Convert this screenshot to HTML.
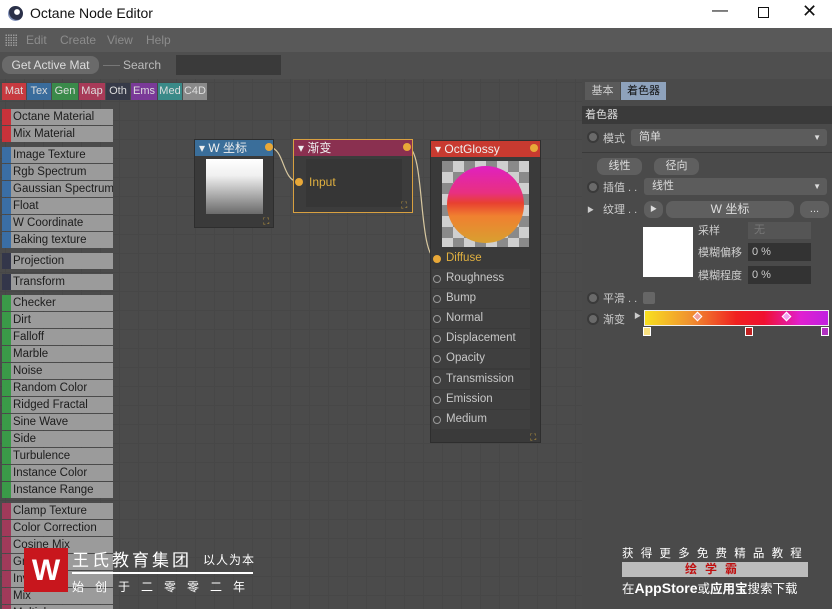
<!DOCTYPE html>
<html><head><meta charset="utf-8"><style>
*{margin:0;padding:0;box-sizing:border-box}
html,body{width:832px;height:609px;overflow:hidden}
body{background:#4a4a4a;font-family:"Liberation Sans","Noto Sans CJK SC",sans-serif;position:relative;font-size:12px}
.a{position:absolute}
#title{left:0;top:0;width:832px;height:28px;background:#fff;color:#111;font-size:14px}
#menu{left:0;top:28px;width:832px;height:24px;background:#595959;color:#8c8c8c}
#tool{left:0;top:52px;width:832px;height:27px;background:#4f4f4f}
#canvas{left:0;top:79px;width:582px;height:530px;background-color:#4b4b4b;background-image:linear-gradient(#474747 1px,transparent 1px),linear-gradient(90deg,#474747 1px,transparent 1px);background-size:19px 19px;background-position:5px 3px}
.tab{top:83px;height:17px;color:#ddd;font-size:11px;line-height:17px;text-align:center}
.it{left:2px;width:111px;height:16px;background:#9b9b9b;color:#1c1c1c;font-size:11.5px;line-height:16px;padding-left:11px;white-space:nowrap;overflow:hidden}
.it i{position:absolute;left:0;top:0;width:9px;height:16px}
.node{background:#3a3a3a;border:1px solid #2e2e2e}
.hd{height:16px;color:#eee;font-size:12px;line-height:16px;padding-left:4px}
.dot{width:8px;height:8px;border-radius:50%;background:#e8a838}
.port{left:432px;width:98px;height:19px;color:#c8c8c8;font-size:11.5px;line-height:19px;padding-left:14px;background:#3f3f3f}
.port b{position:absolute;left:1px;top:6px;width:8px;height:8px;border-radius:50%;border:1.5px solid #999}
#rp{left:582px;top:79px;width:250px;height:530px;background:#4a4a4a;color:#ccc;font-size:11px}
.rb{border-radius:50%;width:12px;height:12px;background:#6a6a6a;border:2px solid #3a3a3a}
.dd{background:#5c5c5c;border-radius:3px;height:17px;line-height:17px;padding-left:8px;color:#ddd}
.btn{background:#5f5f5f;border-radius:7px;height:17px;line-height:17px;text-align:center;color:#ddd}
</style></head><body>
<div id="title" class="a">
<div class="a" style="left:8px;top:6px;width:15px;height:15px;border-radius:50%;background:radial-gradient(circle at 60% 40%,#fff 0 20%,#2a3048 25% 60%,#8090b8 65%)"></div>
<div class="a" style="left:30px;top:5px">Octane Node Editor</div>
<div class="a" style="left:712px;top:2px;font-size:16px">—</div>
<div class="a" style="left:758px;top:7px;width:11px;height:11px;border:1px solid #111"></div>
<div class="a" style="left:802px;top:1px;font-size:18px">✕</div>
</div>
<div id="menu" class="a">
<div class="a" style="left:5px;top:6px;width:13px;height:12px;background-image:radial-gradient(#999 40%,transparent 45%);background-size:2.5px 2.5px"></div>
<div class="a" style="left:26px;top:5px">Edit</div><div class="a" style="left:60px;top:5px">Create</div><div class="a" style="left:107px;top:5px">View</div><div class="a" style="left:146px;top:5px">Help</div>
</div>
<div id="tool" class="a">
<div class="a" style="left:2px;top:4px;width:97px;height:18px;border-radius:8px;background:#6a6a6a;color:#ddd;line-height:18px;text-align:center">Get Active Mat</div>
<div class="a" style="left:103px;top:13px;width:17px;height:1px;background:#777"></div>
<div class="a" style="left:123px;top:6px;color:#bbb">Search</div>
<div class="a" style="left:176px;top:3px;width:105px;height:20px;background:#3a3a3a"></div>
</div>
<div id="canvas" class="a"></div>
<div class="a tab" style="left:2px;width:24px;background:#c73a40">Mat</div>
<div class="a tab" style="left:27px;width:24px;background:#3a6c9c">Tex</div>
<div class="a tab" style="left:52px;width:26px;background:#3a8a4a">Gen</div>
<div class="a tab" style="left:79px;width:26px;background:#a83a58">Map</div>
<div class="a tab" style="left:106px;width:24px;background:#363a48">Oth</div>
<div class="a tab" style="left:131px;width:26px;background:#7a3a98">Ems</div>
<div class="a tab" style="left:158px;width:24px;background:#3a8a88">Med</div>
<div class="a tab" style="left:183px;width:24px;background:#8a8a8a">C4D</div>

<div class="a it" style="top:109px"><i style="background:#c8323a"></i>Octane Material</div>
<div class="a it" style="top:126px"><i style="background:#c8323a"></i>Mix Material</div>
<div class="a it" style="top:147px"><i style="background:#3a6ea5"></i>Image Texture</div>
<div class="a it" style="top:164px"><i style="background:#3a6ea5"></i>Rgb Spectrum</div>
<div class="a it" style="top:181px"><i style="background:#3a6ea5"></i>Gaussian Spectrum</div>
<div class="a it" style="top:198px"><i style="background:#3a6ea5"></i>Float</div>
<div class="a it" style="top:215px"><i style="background:#3a6ea5"></i>W Coordinate</div>
<div class="a it" style="top:232px"><i style="background:#3a6ea5"></i>Baking texture</div>
<div class="a it" style="top:253px"><i style="background:#33364a"></i>Projection</div>
<div class="a it" style="top:274px"><i style="background:#33364a"></i>Transform</div>
<div class="a it" style="top:295px"><i style="background:#3a9a48"></i>Checker</div>
<div class="a it" style="top:312px"><i style="background:#3a9a48"></i>Dirt</div>
<div class="a it" style="top:329px"><i style="background:#3a9a48"></i>Falloff</div>
<div class="a it" style="top:346px"><i style="background:#3a9a48"></i>Marble</div>
<div class="a it" style="top:363px"><i style="background:#3a9a48"></i>Noise</div>
<div class="a it" style="top:380px"><i style="background:#3a9a48"></i>Random Color</div>
<div class="a it" style="top:397px"><i style="background:#3a9a48"></i>Ridged Fractal</div>
<div class="a it" style="top:414px"><i style="background:#3a9a48"></i>Sine Wave</div>
<div class="a it" style="top:431px"><i style="background:#3a9a48"></i>Side</div>
<div class="a it" style="top:448px"><i style="background:#3a9a48"></i>Turbulence</div>
<div class="a it" style="top:465px"><i style="background:#3a9a48"></i>Instance Color</div>
<div class="a it" style="top:482px"><i style="background:#3a9a48"></i>Instance Range</div>
<div class="a it" style="top:503px"><i style="background:#a03a5a"></i>Clamp Texture</div>
<div class="a it" style="top:520px"><i style="background:#a03a5a"></i>Color Correction</div>
<div class="a it" style="top:537px"><i style="background:#a03a5a"></i>Cosine Mix</div>
<div class="a it" style="top:554px"><i style="background:#a03a5a"></i>Gradient</div>
<div class="a it" style="top:571px"><i style="background:#a03a5a"></i>Invert</div>
<div class="a it" style="top:588px"><i style="background:#a03a5a"></i>Mix</div>
<div class="a it" style="top:605px"><i style="background:#a03a5a"></i>Multiply</div>

<svg class="a" style="left:0;top:0" width="582" height="609"><g fill="none" stroke="#d8c8a0" stroke-width="1.2"><path d="M270 147 C285 150,282 180,298 182"/><path d="M408 147 C425 150,418 255,436 259"/></g></svg>

<div class="a node" style="left:194px;top:139px;width:80px;height:89px">
<div class="hd" style="background:#3a6e9a">▾ W 坐标</div>
<div class="a" style="left:11px;top:19px;width:57px;height:55px;background:linear-gradient(#fff,#f0f0f0 30%,#6a6a6a)"></div>
<div class="a" style="left:68px;top:76px;color:#c8a040;font-size:9px">⛶</div>
</div>
<div class="a dot" style="left:265px;top:143px"></div>
<div class="a node" style="left:293px;top:139px;width:120px;height:74px;border:1px solid #d8a040;background:#3c3c3c">
<div class="hd" style="background:#8a3050">▾ 渐变</div>
<div class="a" style="left:12px;top:19px;width:96px;height:48px;background:#363636"></div>
<div class="a" style="left:15px;top:35px;color:#e0b040">Input</div>
<div class="a" style="left:107px;top:60px;color:#c8a040;font-size:9px">⛶</div>
</div>
<div class="a dot" style="left:403px;top:143px"></div>
<div class="a dot" style="left:295px;top:178px"></div>
<div class="a node" style="left:430px;top:140px;width:111px;height:303px">
<div class="hd" style="background:#c83a30">▾ OctGlossy</div>
<div class="a" style="left:11px;top:20px;width:87px;height:86px;background:conic-gradient(#cfcfcf 25%,#8a8a8a 0 50%,#cfcfcf 0 75%,#8a8a8a 0);background-size:22px 22px"></div>
<div class="a" style="left:16px;top:25px;width:77px;height:77px;border-radius:50%;background:linear-gradient(#e020c0,#e83080 35%,#e84030 48%,#f08030 65%,#d8a030)"></div>
<div class="a" style="left:99px;top:291px;color:#c8a040;font-size:9px">⛶</div>
</div>
<div class="a dot" style="left:530px;top:144px"></div>
<div class="a port" style="top:249px;color:#e0b040;background:#3a3a3a"><b style="background:#e8a838;border:none"></b>Diffuse</div>
<div class="a port" style="top:269px"><b></b>Roughness</div>
<div class="a port" style="top:289px"><b></b>Bump</div>
<div class="a port" style="top:309px"><b></b>Normal</div>
<div class="a port" style="top:329px"><b></b>Displacement</div>
<div class="a port" style="top:349px"><b></b>Opacity</div>
<div class="a port" style="top:370px"><b></b>Transmission</div>
<div class="a port" style="top:390px"><b></b>Emission</div>
<div class="a port" style="top:410px"><b></b>Medium</div>

<div id="rp" class="a">
<div class="a" style="left:3px;top:3px;width:35px;height:18px;background:#5a5a5a;line-height:18px;text-align:center">基本</div>
<div class="a" style="left:39px;top:3px;width:45px;height:18px;background:#8ea2bc;color:#111;line-height:18px;text-align:center">着色器</div>
<div class="a" style="left:0;top:27px;width:250px;height:18px;background:#3a3a3a;line-height:18px;padding-left:3px;color:#ddd">着色器</div>
<div class="a rb" style="left:5px;top:52px"></div><div class="a" style="left:21px;top:51px">模式</div>
<div class="a dd" style="left:49px;top:50px;width:196px">简单<span style="position:absolute;right:6px;font-size:8px">▼</span></div>
<div class="a" style="left:0;top:73px;width:250px;height:1px;background:#3a3a3a"></div>
<div class="a btn" style="left:15px;top:79px;width:45px">线性</div>
<div class="a btn" style="left:72px;top:79px;width:45px">径向</div>
<div class="a rb" style="left:5px;top:102px"></div><div class="a" style="left:21px;top:100px">插值 . .</div>
<div class="a dd" style="left:62px;top:99px;width:183px">线性<span style="position:absolute;right:6px;font-size:8px">▼</span></div>
<div class="a" style="left:5px;top:126px;font-size:7px">▶</div><div class="a" style="left:21px;top:122px">纹理 . .</div>
<div class="a btn" style="left:62px;top:122px;width:19px;font-size:7px">▶</div>
<div class="a btn" style="left:84px;top:122px;width:128px;font-size:12px">W 坐标</div>
<div class="a btn" style="left:218px;top:122px;width:29px">...</div>
<div class="a" style="left:61px;top:148px;width:50px;height:50px;background:#fff"></div>
<div class="a" style="left:116px;top:143px">采样</div>
<div class="a" style="left:166px;top:143px;width:63px;height:17px;background:#555;color:#777;padding-left:6px;line-height:17px">无</div>
<div class="a" style="left:116px;top:165px">模糊偏移</div>
<div class="a" style="left:166px;top:164px;width:63px;height:18px;background:#333;padding-left:4px;line-height:18px">0 %</div>
<div class="a" style="left:116px;top:188px">模糊程度</div>
<div class="a" style="left:166px;top:187px;width:63px;height:18px;background:#333;padding-left:4px;line-height:18px">0 %</div>
<div class="a rb" style="left:5px;top:213px"></div><div class="a" style="left:21px;top:211px">平滑 . .</div>
<div class="a" style="left:61px;top:213px;width:12px;height:12px;background:#666;border-radius:2px"></div>
<div class="a rb" style="left:5px;top:234px"></div><div class="a" style="left:21px;top:232px">渐变</div>
<div class="a" style="left:52px;top:232px;font-size:7px">▶</div>
<div class="a" style="left:62px;top:231px;width:185px;height:16px;border:1px solid #eee;background:linear-gradient(90deg,#f8e020,#f09030 25%,#f02020 50%,#f01030 65%,#e020d0 85%,#c020e0)"></div>
<div class="a" style="left:112px;top:234px;width:7px;height:7px;background:#f0a0a0;border:1px solid #fff;transform:rotate(45deg)"></div>
<div class="a" style="left:201px;top:234px;width:7px;height:7px;background:#f0a0f0;border:1px solid #fff;transform:rotate(45deg)"></div>
<div class="a" style="left:61px;top:248px;width:8px;height:9px;background:#f8e080;border:1px solid #fff"></div>
<div class="a" style="left:163px;top:248px;width:8px;height:9px;background:#c02020;border:1px solid #fff"></div>
<div class="a" style="left:239px;top:248px;width:8px;height:9px;background:#b030c0;border:1px solid #fff"></div>
</div>

<div class="a" style="left:24px;top:548px;width:44px;height:44px;background:#c8161d"></div>
<div class="a" style="left:30px;top:556px;width:32px;height:30px;color:#fff;font-size:30px;font-weight:bold;line-height:30px;text-align:center">W</div>
<div class="a" style="left:72px;top:546px;color:#fff;font-size:17px;letter-spacing:3px">王氏教育集团</div>
<div class="a" style="left:203px;top:551px;color:#fff;font-size:12px;letter-spacing:1px">以人为本</div>
<div class="a" style="left:72px;top:572px;width:181px;height:2px;background:#fff"></div>
<div class="a" style="left:72px;top:578px;color:#fff;font-size:12px;letter-spacing:11px;white-space:nowrap">始创于二零零二年</div>
<div class="a" style="left:622px;top:545px;color:#fff;font-size:11.5px;letter-spacing:7.2px;white-space:nowrap">获得更多免费精品教程</div>
<div class="a" style="left:622px;top:562px;width:186px;height:15px;background:#bcbcbc;color:#c01010;font-weight:bold;text-align:center;line-height:15px;letter-spacing:8px;font-size:12px">绘学霸</div>
<div class="a" style="left:622px;top:578px;color:#fff;font-size:12.5px;white-space:nowrap">在<b style="font-size:14px">AppStore</b>或<b>应用宝</b>搜索下载</div>
</body></html>
